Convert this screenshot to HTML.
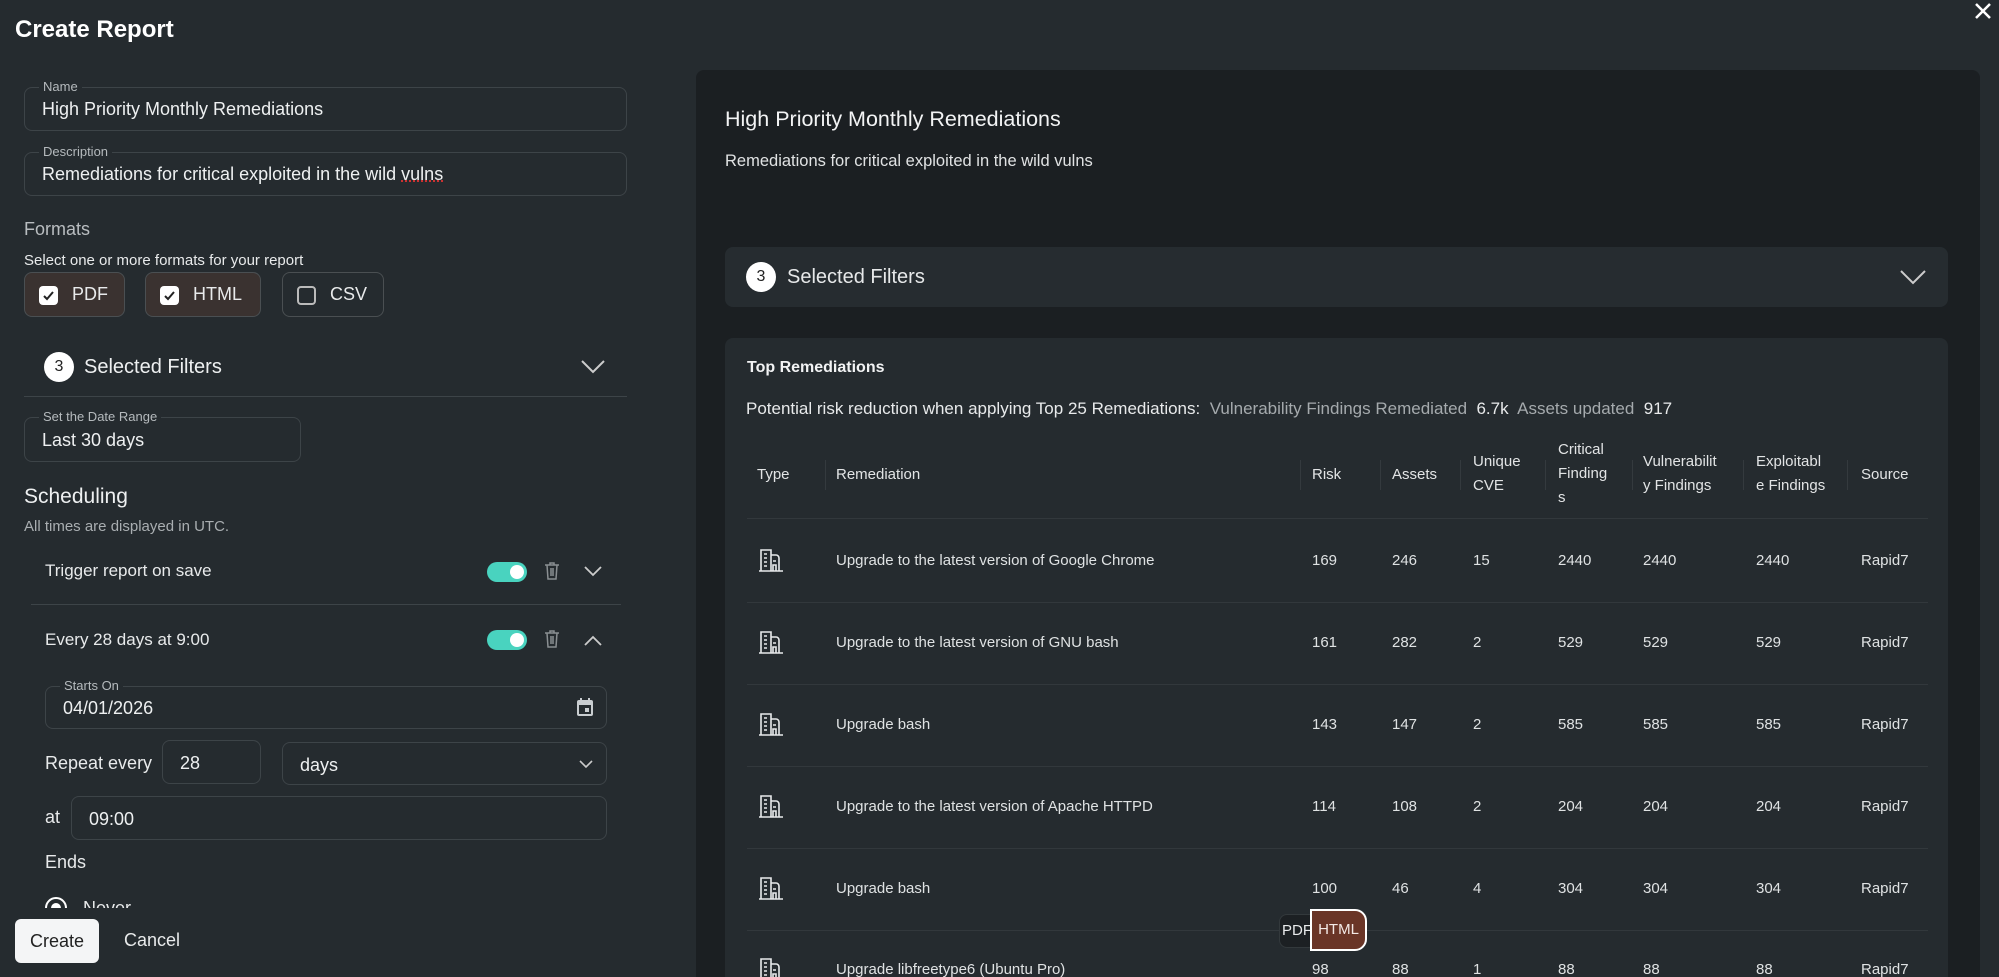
<!DOCTYPE html>
<html><head><meta charset="utf-8"><style>
*{box-sizing:border-box;margin:0;padding:0}
html{width:1999px;height:977px;overflow:hidden}
body{width:1999px;height:977px;overflow:hidden;background:#252b2f;font-family:"Liberation Sans",sans-serif;color:#e8eaeb;position:relative}
.a{position:absolute}
.fld{position:absolute;border:1px solid #3d4448;border-radius:8px}
.lbl{position:absolute;top:-9px;left:14px;font-size:13px;color:#b5babd;background:#252b2f;padding:0 4px;line-height:16px}
.val{position:absolute;left:17px;font-size:18px;color:#eef0f1}
.chk{position:absolute;top:272px;height:45px;border:1px solid #4a4f52;border-radius:8px;font-size:18px}
.box{position:absolute;left:14px;top:13px;width:19px;height:19px;border-radius:4px;background:#fff}
.tog{position:absolute;width:40px;height:20px;border-radius:10px;background:#49d3bf}
.tog:after{content:"";position:absolute;right:3px;top:3px;width:14px;height:14px;border-radius:50%;background:#fff}
.badge{position:absolute;width:30px;height:30px;border-radius:50%;background:#fff;color:#222;font-size:16px;text-align:center;line-height:30px}
.th{position:absolute;font-size:15px;color:#e2e4e5;line-height:24px}
.td{position:absolute;font-size:15px;color:#dfe2e3;white-space:nowrap}
.sep{position:absolute;top:460px;width:1px;height:30px;background:#343a3e}
.hl{position:absolute;left:747px;width:1181px;height:1px;background:#32383c}
</style></head><body>
<div class="a" style="left:15px;top:16px;font-size:24px;font-weight:bold;color:#fff">Create Report</div>
<svg class="a" style="left:1974px;top:2px" width="18" height="18" viewBox="0 0 18 18"><path d="M2 2L16 16M16 2L2 16" stroke="#fff" stroke-width="2.5"/></svg>

<div class="fld" style="left:24px;top:87px;width:603px;height:44px"><span class="lbl">Name</span><span class="val" style="top:11px">High Priority Monthly Remediations</span></div>
<div class="fld" style="left:24px;top:152px;width:603px;height:44px"><span class="lbl">Description</span><span class="val" style="top:11px">Remediations for critical exploited in the wild <span style="text-decoration:underline dotted #d33">vulns</span></span></div>
<div class="a" style="left:24px;top:219px;font-size:18px;color:#b9bdc0">Formats</div>
<div class="a" style="left:24px;top:252px;font-size:15px;color:#e8eaeb">Select one or more formats for your report</div>
<div class="chk" style="left:24px;width:101px;background:#3a3230"><div class="box"></div><svg class="a" style="left:17px;top:17px" width="13" height="12"><path d="M2 6l3 3 6-7" stroke="#222" stroke-width="2" fill="none"/></svg><span class="a" style="left:47px;top:11px">PDF</span></div>
<div class="chk" style="left:145px;width:116px;background:#3a3230"><div class="box"></div><svg class="a" style="left:17px;top:17px" width="13" height="12"><path d="M2 6l3 3 6-7" stroke="#222" stroke-width="2" fill="none"/></svg><span class="a" style="left:47px;top:11px">HTML</span></div>
<div class="chk" style="left:282px;width:102px"><div class="box" style="background:none;border:2px solid #bbb"></div><span class="a" style="left:47px;top:11px">CSV</span></div>

<div class="badge" style="left:44px;top:352px">3</div>
<div class="a" style="left:84px;top:356px;font-size:20px;color:#eef0f1">Selected Filters</div>
<svg class="a" style="left:580px;top:358px" width="26" height="16"><path d="M2 3l11 11L24 3" stroke="#ccc" stroke-width="2" fill="none"/></svg>
<div class="a" style="left:24px;top:396px;width:603px;height:1px;background:#3d4448"></div>
<div class="fld" style="left:24px;top:417px;width:277px;height:45px"><span class="lbl">Set the Date Range</span><span class="val" style="top:12px">Last 30 days</span></div>

<div class="a" style="left:24px;top:485px;font-size:21px;color:#eef0f1">Scheduling</div>
<div class="a" style="left:24px;top:518px;font-size:15px;color:#a9aeb1">All times are displayed in UTC.</div>
<div class="a" style="left:45px;top:561px;font-size:17px">Trigger report on save</div>
<div class="tog" style="left:487px;top:562px"></div>
<svg class="a" style="left:544px;top:561px" width="16" height="20"><path d="M1 4h14M6 4V2h4v2M3 4l1 14h8l1-14M7 7v8M9 7v8" stroke="#8a8f92" stroke-width="1.5" fill="none"/></svg>
<svg class="a" style="left:584px;top:566px" width="18" height="11"><path d="M1 1l8 8 8-8" stroke="#ccc" stroke-width="1.8" fill="none"/></svg>
<div class="a" style="left:31px;top:604px;width:590px;height:1px;background:#3d4448"></div>
<div class="a" style="left:45px;top:630px;font-size:17px">Every 28 days at 9:00</div>
<div class="tog" style="left:487px;top:630px"></div>
<svg class="a" style="left:544px;top:629px" width="16" height="20"><path d="M1 4h14M6 4V2h4v2M3 4l1 14h8l1-14M7 7v8M9 7v8" stroke="#8a8f92" stroke-width="1.5" fill="none"/></svg>
<svg class="a" style="left:584px;top:635px" width="18" height="11"><path d="M1 10l8-8 8 8" stroke="#ccc" stroke-width="1.8" fill="none"/></svg>

<div class="fld" style="left:45px;top:686px;width:562px;height:43px"><span class="lbl">Starts On</span><span class="val" style="top:11px">04/01/2026</span>
<svg class="a" style="left:530px;top:10px" width="18" height="20"><rect x="1" y="3" width="16" height="16" rx="2" fill="#c9cdd0"/><rect x="3" y="8" width="12" height="9" fill="#252b2f"/><rect x="9" y="11" width="4" height="4" fill="#c9cdd0"/><path d="M5 1v4M13 1v4" stroke="#c9cdd0" stroke-width="2"/></svg></div>
<div class="a" style="left:45px;top:753px;font-size:18px">Repeat every</div>
<div class="fld" style="left:162px;top:740px;width:99px;height:44px"><span class="val" style="top:12px">28</span></div>
<div class="fld" style="left:282px;top:742px;width:325px;height:43px"><span class="val" style="top:12px">days</span><svg class="a" style="left:296px;top:17px" width="14" height="9"><path d="M1 1l6 6 6-6" stroke="#ccc" stroke-width="1.6" fill="none"/></svg></div>
<div class="a" style="left:45px;top:807px;font-size:18px">at</div>
<div class="fld" style="left:71px;top:796px;width:536px;height:44px"><span class="val" style="top:12px">09:00</span></div>
<div class="a" style="left:45px;top:852px;font-size:18px">Ends</div>
<div class="a" style="left:45px;top:897px;width:22px;height:11px;overflow:hidden"><div style="width:22px;height:22px;border-radius:50%;border:2px solid #fff;position:relative"><div style="position:absolute;left:4px;top:4px;width:10px;height:10px;border-radius:50%;background:#fff"></div></div></div>
<div class="a" style="left:83px;top:894px;height:14px;overflow:hidden;font-size:18px;line-height:22px;padding-top:3px">Never</div>

<div class="a" style="left:15px;top:919px;width:84px;height:44px;background:#f4f5f6;border-radius:6px;color:#222;font-size:18px;text-align:center;line-height:44px">Create</div>
<div class="a" style="left:124px;top:930px;font-size:18px">Cancel</div>

<!-- preview -->
<div class="a" style="left:696px;top:70px;width:1284px;height:907px;background:#1b1f22;border-radius:8px 8px 0 0"></div>
<div class="a" style="left:725px;top:107px;font-size:21.5px;color:#f2f3f4">High Priority Monthly Remediations</div>
<div class="a" style="left:725px;top:152px;font-size:16.5px;color:#e0e2e3">Remediations for critical exploited in the wild vulns</div>
<div class="a" style="left:725px;top:247px;width:1223px;height:60px;background:#262c30;border-radius:8px"></div>
<div class="badge" style="left:746px;top:262px">3</div>
<div class="a" style="left:787px;top:266px;font-size:20px;color:#e6e8e9">Selected Filters</div>
<svg class="a" style="left:1899px;top:268px" width="28" height="18"><path d="M2 3l12 12L26 3" stroke="#ccc" stroke-width="2" fill="none"/></svg>

<div class="a" style="left:725px;top:338px;width:1223px;height:639px;background:#252b2f;border-radius:8px 8px 0 0;overflow:hidden" id="card"></div>
<div class="a" style="left:747px;top:359px;font-size:16px;font-weight:bold;color:#f2f3f4">Top Remediations</div>
<div class="a" style="left:746px;top:399px;font-size:17px;color:#e8eaeb">Potential risk reduction when applying Top 25 Remediations:&nbsp; <span style="color:#a5aaad">Vulnerability Findings Remediated</span>&nbsp; 6.7k&nbsp; <span style="color:#a5aaad">Assets updated</span>&nbsp; 917</div>

<div class="th" style="left:757px;top:463px">Type</div>
<div class="th" style="left:836px;top:463px">Remediation</div>
<div class="th" style="left:1312px;top:463px">Risk</div>
<div class="th" style="left:1392px;top:463px">Assets</div>
<div class="th" style="left:1473px;top:450px">Unique<br>CVE</div>
<div class="th" style="left:1558px;top:438px">Critical<br>Finding<br>s</div>
<div class="th" style="left:1643px;top:450px">Vulnerabilit<br>y Findings</div>
<div class="th" style="left:1756px;top:450px">Exploitabl<br>e Findings</div>
<div class="th" style="left:1861px;top:463px">Source</div>
<div class="sep" style="left:825px"></div><div class="sep" style="left:1300px"></div><div class="sep" style="left:1380px"></div><div class="sep" style="left:1460px"></div><div class="sep" style="left:1545px"></div><div class="sep" style="left:1632px"></div><div class="sep" style="left:1743px"></div><div class="sep" style="left:1847px"></div>
<div class="hl" style="top:518px"></div>

<div class="a" style="left:0;top:0;width:1999px;height:977px;overflow:hidden;pointer-events:none" id="rows"></div>
<script>
var d=[["Upgrade to the latest version of Google Chrome","169","246","15","2440","2440","2440"],["Upgrade to the latest version of GNU bash","161","282","2","529","529","529"],["Upgrade bash","143","147","2","585","585","585"],["Upgrade to the latest version of Apache HTTPD","114","108","2","204","204","204"],["Upgrade bash","100","46","4","304","304","304"],["Upgrade libfreetype6 (Ubuntu Pro)","98","88","1","88","88","88"]];
var ys=[561,643,725,807,889,970],xs=[836,1312,1392,1473,1558,1643,1756],h="";
var ic='<svg width="26" height="26" viewBox="0 0 26 26" fill="none" stroke="#e8eaeb" stroke-width="1.6"><path d="M3 24V3h10v21M13 8h5a3 3 0 0 1 3 3v13H13M1 24h24M6 7h3M6 11h3M6 15h3M6 19h3M15 14h3M15 18h3v6h-3z"/></svg>';
d.forEach(function(r,i){var y=ys[i];
h+='<div class="a" style="left:758px;top:'+(y-14)+'px">'+ic+'</div>';
r.forEach(function(c,j){h+='<div class="td" style="left:'+xs[j]+'px;top:'+(y-9)+'px">'+c+'</div>'});
h+='<div class="td" style="left:1861px;top:'+(y-9)+'px">Rapid7</div>';
if(i<5)h+='<div class="hl" style="top:'+(y+41)+'px"></div>';});
document.getElementById('rows').innerHTML=h;
</script>
<div class="a" style="left:1279px;top:914px;width:50px;height:34px;background:#1c2023;border:1px solid #33393c;border-radius:8px 0 0 8px;font-size:15px;line-height:32px;padding-left:2px">PDF</div>
<div class="a" style="left:1310px;top:909px;width:57px;height:42px;background:#6a3527;border:2px solid #fff;border-radius:0 12px 12px 0;font-size:15px;line-height:38px;text-align:center;color:#f3e9e6">HTML</div>
</body></html>
